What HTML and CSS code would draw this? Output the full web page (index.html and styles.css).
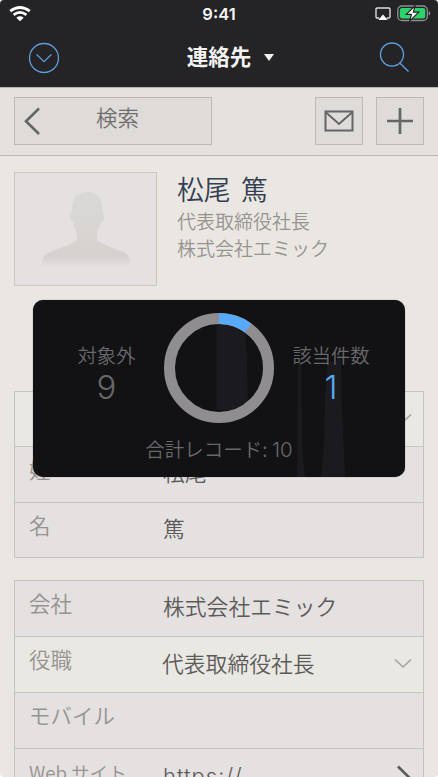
FILE: index.html
```html
<!DOCTYPE html>
<html lang="ja">
<head>
<meta charset="utf-8">
<title>連絡先</title>
<link rel="stylesheet" href="styles.css">
</head>
<body>
<div class="app">
  <header class="top">
    <div class="status">
      <svg class="wifi" width="22" height="16" viewBox="0 0 22 16" fill="none" stroke="#fff" stroke-width="2.7"><path d="M1.2 5.2Q11 -2.2 20.8 5.2"/><path d="M4.6 8.9Q11 4 17.4 8.9"/><path d="M7.3 11.7Q11 9 14.7 11.7L11 15.2Z" fill="#fff" stroke="none"/></svg>
      <span class="time">9:41</span>
      <svg class="airplay" width="16" height="14" viewBox="0 0 16 14"><path d="M4.3 11H2.2Q1 11 1 9.8V2.2Q1 1 2.2 1H13.8Q15 1 15 2.2V9.8Q15 11 13.8 11H11.7" fill="none" stroke="#ddd" stroke-width="1.4"/><path d="M8 7.500L12.700 13H3.300Z" fill="#fff"/></svg>
      <svg class="battery" width="34" height="17" viewBox="0 0 34 17"><rect x=".8" y="1" width="29.5" height="14.5" rx="4.3" fill="none" stroke="#8f8f91" stroke-width="1.3"/><rect x="2.8" y="3" width="25.5" height="10.5" rx="2.3" fill="#2bd46c"/><path d="M31.7 6Q33.2 6.5 33.2 8.2T31.7 10.5Z" fill="#8f8f91"/><path d="M18 .8L9.3 9.4H14.4L12.8 15.9L21.8 7.1H16.5Z" fill="#fff" stroke="#242326" stroke-width="1.2"/></svg>
    </div>
    <div class="nav">
      <svg width="32" height="32" viewBox="0 0 32 32" fill="none" stroke="#609bdb" stroke-width="1.3"><circle cx="16" cy="16" r="14.5"/><path d="M8.6 12.5L16 19.7L23.4 12.5"/></svg>
      <h1 class="title"><span>連絡先</span><span class="caret"></span></h1>
      <svg width="32" height="32" viewBox="0 0 32 32" fill="none" stroke="#609bdb" stroke-width="1.4"><circle cx="14" cy="12.5" r="11.5"/><path d="M21.8 21L30.5 29.5"/></svg>
    </div>
  </header>
  <div class="toolbar">
    <div class="btn back">
      <svg width="18" height="28" viewBox="0 0 18 28" fill="none" stroke="#656565" stroke-width="2.6"><path d="M16 1.5L3 14.3L16 27"/></svg>
      <span>検索</span>
    </div>
    <div class="btn square mail">
      <svg width="30" height="22" viewBox="0 0 30 22" fill="none" stroke="#656565" stroke-width="2"><rect x="1.5" y="1.5" width="27" height="19"/><path d="M2 2.5L15 14L28 2.5"/></svg>
    </div>
    <div class="btn square">
      <svg width="28" height="28" viewBox="0 0 28 28" stroke="#656565" stroke-width="2.7"><path d="M14 1V27M1 14H27"/></svg>
    </div>
  </div>
  <main class="content">
    <section class="profile">
      <div class="photo">
        <svg width="90" height="76" viewBox="0 0 90 76">
          <defs><linearGradient id="fade" x1="0" y1="0" x2="0" y2="1"><stop offset="0" stop-color="#dad8d6"/><stop offset=".5" stop-color="#d8d5d3"/><stop offset=".87" stop-color="#d4d1cf"/><stop offset="1" stop-color="#e3e0df"/></linearGradient></defs>
          <path fill="url(#fade)" d="M46 1C55 1 60 6 61 14L61.5 21Q64 22 63 27Q62 32 59.5 32Q58 38 56 41V49C62 54 79 59 84 62Q90 66 90 75H1Q0 66 7 62C13 59 30 54 36 49Q36 41 34 38L32.500 32Q30 31 29 27Q28 22 31 21L31.500 14C32 5 38 1 46 1Z"/>
        </svg>
      </div>
      <div class="who">
        <div class="name">松尾 篤</div>
        <div class="sub">代表取締役社長</div>
        <div class="sub">株式会社エミック</div>
      </div>
    </section>
    <section class="card person">
      <div class="row light"><span class="label"></span><span class="value"></span><svg class="chev" width="18" height="11" viewBox="0 0 18 11"><path d="M1 1.500L9 9L17 1.500"/></svg></div>
      <div class="row"><span class="label">姓</span><span class="value">松尾</span></div>
      <div class="row"><span class="label">名</span><span class="value">篤</span></div>
    </section>
    <section class="card">
      <div class="row"><span class="label">会社</span><span class="value">株式会社エミック</span></div>
      <div class="row light title-row"><span class="label">役職</span><span class="value">代表取締役社長</span><svg class="chev" width="18" height="11" viewBox="0 0 18 11"><path d="M1 1.500L9 9L17 1.500"/></svg></div>
      <div class="row"><span class="label">モバイル</span><span class="value"></span></div>
      <div class="row web"><span class="label">Web サイト</span><span class="value">https://</span><svg class="go" width="18" height="28" viewBox="0 0 18 28"><path d="M2 1.500L15 14.300L2 27"/></svg></div>
    </section>
  </main>
  <aside class="hud">
    <svg class="shade" width="372" height="177" viewBox="0 0 372 177" fill="#1b1a1f"><path d="M183.500 24H212L214 60L215 110H183.500ZM265 64H268.500L269 145L272 177H264ZM304 55H308L309 110L312 177H288L291 145L292 95L295 62H304Z"/></svg>
    <div class="stats">
      <div class="stat"><span class="cap">対象外</span><span class="num">9</span></div>
      <svg width="110" height="110" viewBox="0 0 110 110" fill="none" stroke-width="11"><circle cx="55" cy="55" r="49.500" stroke="#8f8d90"/><path d="M55 5.500A49.500 49.500 0 0 1 84.100 14.950" stroke="#58a9f7"/></svg>
      <div class="stat"><span class="cap">該当件数</span><span class="num hit">1</span></div>
    </div>
    <div class="total">合計レコード: <span class="count">10</span></div>
  </aside>
</div>
</body>
</html>
```

FILE: styles.css
```css
* { box-sizing: border-box; }
body { margin: 0; background: #fff; overflow: hidden; font-family: "Noto Sans CJK JP", sans-serif; font-weight: 350; }
svg { display: block; flex: none; }
.app { position: relative; width: 438px; height: 777px; overflow: hidden; border-radius: 4px; background: #eae7e2; }
.top { height: 87px; background: #242326; }
.status { height: 28px; display: grid; grid-template-columns: 1fr auto 1fr; grid-template-rows: 28px; align-items: center; position: relative; }
.wifi { margin-left: 9px; }
.time { color: #f5f5f5; font: 600 16.5px/28px Inter, sans-serif; grid-column: 2; }
.airplay { position: absolute; left: 375px; top: 7px; }
.battery { position: absolute; left: 397px; top: 5px; }
.nav { height: 59px; padding: 0 28px; display: flex; justify-content: space-between; align-items: center; }
.title { margin: 0 8px 3px 31px; color: #f2f2f0; font-size: 21.5px; font-weight: 700; line-height: 30px; display: flex; align-items: center; gap: 13px; }
.caret { margin-top: 2px; border: 5px solid transparent; border-top: 7px solid #f2f2f0; border-bottom: 0; }
.toolbar { height: 69px; padding: 9px 14px; display: flex; background: #e4e1de; border-top: 1px solid #b5b4b3; border-bottom: 1px solid #b9b7b4; }
.btn { height: 48px; border: 1px solid #bcb9b7; background: #dedbd9; display: flex; align-items: center; }
.back { width: 198px; padding-left: 8px; }
.back span { margin: -9px 0 0 55px; color: #706f6e; font-size: 21.5px; line-height: 28px; }
.square { width: 48px; justify-content: center; }
.mail { margin-left: auto; margin-right: 13px; }
.profile { padding: 16px 14px 0; height: 235px; display: flex; gap: 20px; }
.photo { width: 143px; height: 114px; border: 1px solid #c9c7c4; background: #e4e1e0; padding: 18px 0 0 26px; }
.name { padding-top: 1px; margin-bottom: 1.500px; color: #344052; font-size: 26.800px; line-height: 32px; word-spacing: 4.500px; }
.sub { color: #969390; font-size: 19px; line-height: 27px; }
.card { margin: 0 14px 22px; border: 1px solid #c4c3c1; }
.row { height: 56px; padding: 8px 11px 0 14px; display: grid; grid-template-columns: 134px 1fr auto; background: #e4e1e0; border-bottom: 1px solid #c4c3c1; }
.row:last-child { border-bottom: 0; height: 54px; }
.person .row:first-child { height: 55px; }
.row.light { background: #eae8e3; }
.label { color: #969390; font-size: 21.500px; line-height: 28px; }
.value { color: #5c5b5a; font-size: 21.800px; line-height: 28px; padding-top: 3px; }
.title-row { grid-template-columns: 133px 1fr auto; }
.title-row .value { padding-top: 4px; }
.chev { margin-top: 13px; fill: none; stroke: #a5a3a1; stroke-width: 1.6; }
.go { margin: 8px -2px 0 0; fill: none; stroke: #5c5b5a; stroke-width: 2.600; }
.web .label { font-size: 18.600px; padding-top: 1px; }
.web .value { font-family: Inter, sans-serif; font-weight: 300; font-size: 22px; letter-spacing: 1px; padding-top: 5px; }
.hud { position: absolute; left: 33px; top: 300px; width: 372px; height: 177px; border-radius: 10px; background: #121114; box-shadow: 0 0 1px #555; overflow: hidden; color: #68686a; padding-top: 13px; }
.shade { position: absolute; left: 0; top: 0; }
.stats { position: relative; display: grid; grid-template-columns: 131px 110px 131px; }
.stat { display: flex; flex-direction: column; align-items: center; padding-top: 28px; }
.stat:first-child { padding-left: 16px; }
.stat:last-child { padding-right: 17px; }
.cap { font-size: 19.300px; line-height: 28px; }
.num { font: 300 33px/36px Inter, sans-serif; }
.hit { color: #58a9f7; }
.total { position: relative; text-align: center; font-size: 19.500px; line-height: 28px; margin-top: 12px; }
.count { font: 300 20.500px/28px Inter, sans-serif; }
```
